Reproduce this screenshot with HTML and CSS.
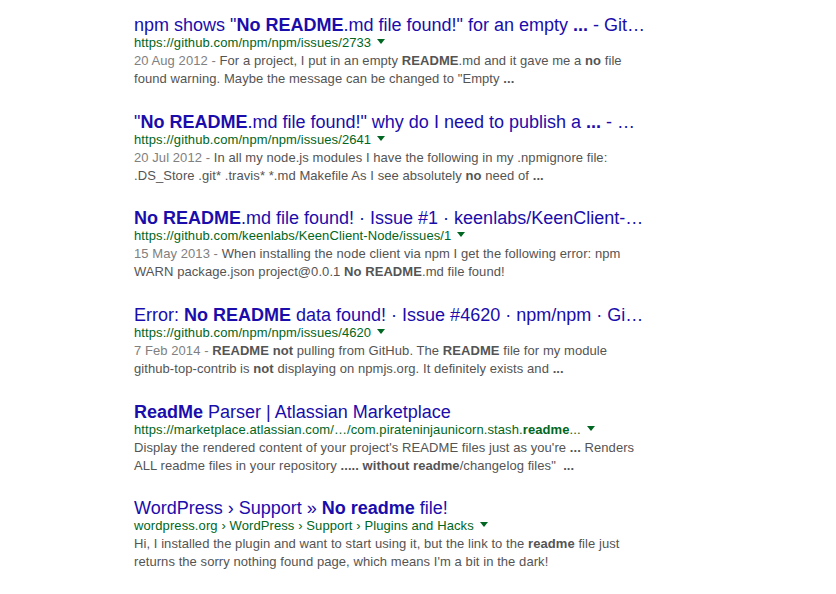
FILE: index.html
```html
<!DOCTYPE html>
<html lang="en">
<head>
<meta charset="utf-8">
<title>Search results</title>
<link rel="stylesheet" href="styles.css">
</head>
<body>
<div class="results">
  <div class="g">
    <h3 class="r"><a href="#">npm shows "<b>No README</b>.md file found!" for an empty <b>...</b> - Git…</a></h3>
    <div class="url"><cite>https://github.com/npm/npm/issues/2733</cite><span class="arrow"></span></div>
    <div class="st"><span class="date">20 Aug 2012 - </span>For a project, I put in an empty <b>README</b>.md and it gave me a <b>no</b> file<br>found warning. Maybe the message can be changed to "Empty <b>...</b></div>
  </div>
  <div class="g">
    <h3 class="r"><a href="#">"<b>No README</b>.md file found!" why do I need to publish a <b>...</b> - …</a></h3>
    <div class="url"><cite>https://github.com/npm/npm/issues/2641</cite><span class="arrow"></span></div>
    <div class="st"><span class="date">20 Jul 2012 - </span>In all my node.js modules I have the following in my .npmignore file:<br>.DS_Store .git* .travis* *.md Makefile As I see absolutely <b>no</b> need of <b>...</b></div>
  </div>
  <div class="g">
    <h3 class="r"><a href="#"><b>No README</b>.md file found! · Issue #1 · keenlabs/KeenClient-…</a></h3>
    <div class="url"><cite>https://github.com/keenlabs/KeenClient-Node/issues/1</cite><span class="arrow"></span></div>
    <div class="st"><span class="date">15 May 2013 - </span>When installing the node client via npm I get the following error: npm<br>WARN package.json project@0.0.1 <b>No README</b>.md file found!</div>
  </div>
  <div class="g">
    <h3 class="r"><a href="#">Error: <b>No README</b> data found! · Issue #4620 · npm/npm · Gi…</a></h3>
    <div class="url"><cite>https://github.com/npm/npm/issues/4620</cite><span class="arrow"></span></div>
    <div class="st"><span class="date">7 Feb 2014 - </span><b>README not</b> pulling from GitHub. The <b>README</b> file for my module<br>github-top-contrib is <b>not</b> displaying on npmjs.org. It definitely exists and <b>...</b></div>
  </div>
  <div class="g">
    <h3 class="r"><a href="#"><b>ReadMe</b> Parser | Atlassian Marketplace</a></h3>
    <div class="url"><cite>https://marketplace.atlassian.com/…/com.pirateninjaunicorn.stash.<b>readme</b>...</cite><span class="arrow"></span></div>
    <div class="st">Display the rendered content of your project's README files just as you're <b>...</b> Renders<br>ALL readme files in your repository <b>..... without readme</b>/changelog files"&nbsp; <b>...</b></div>
  </div>
  <div class="g">
    <h3 class="r"><a href="#">WordPress › Support » <b>No readme</b> file!</a></h3>
    <div class="url"><cite>wordpress.org › WordPress › Support › Plugins and Hacks</cite><span class="arrow"></span></div>
    <div class="st">Hi, I installed the plugin and want to start using it, but the link to the <b>readme</b> file just<br>returns the sorry nothing found page, which means I'm a bit in the dark!</div>
  </div>
</div>
</body>
</html>
```

FILE: styles.css
```css
html, body {
  margin: 0;
  padding: 0;
  background: #fff;
}
body {
  font-family: "Liberation Sans", Arial, sans-serif;
}
.results {
  display: flex;
  flex-direction: column;
  gap: 23.66px;
  padding: 15px 0 0 134px;
  width: 560px;
}
.g {
  display: flex;
  flex-direction: column;
}
.r {
  margin: 0;
  font-size: 18px;
  line-height: 20px;
  font-weight: normal;
  white-space: nowrap;
  overflow: hidden;
}
.r a {
  color: #1a0dab;
  text-decoration: none;
}
.r b {
  font-weight: bold;
}
.url {
  margin-bottom: 1px;
  font-size: 13px;
  line-height: 16px;
  letter-spacing: 0.1px;
  white-space: nowrap;
}
.url cite {
  font-style: normal;
  color: #006621;
}
.url cite b {
  font-weight: bold;
}
.arrow {
  display: inline-block;
  width: 0;
  height: 0;
  border-top: 5px solid #006621;
  border-left: 4px solid transparent;
  border-right: 4px solid transparent;
  margin-left: 6px;
  vertical-align: 3px;
}
.st {
  font-size: 13px;
  line-height: 18px;
  letter-spacing: 0.07px;
  color: #545454;
  white-space: nowrap;
}
.st .date {
  color: #808080;
}
.st b {
  font-weight: bold;
  color: #545454;
}
```
